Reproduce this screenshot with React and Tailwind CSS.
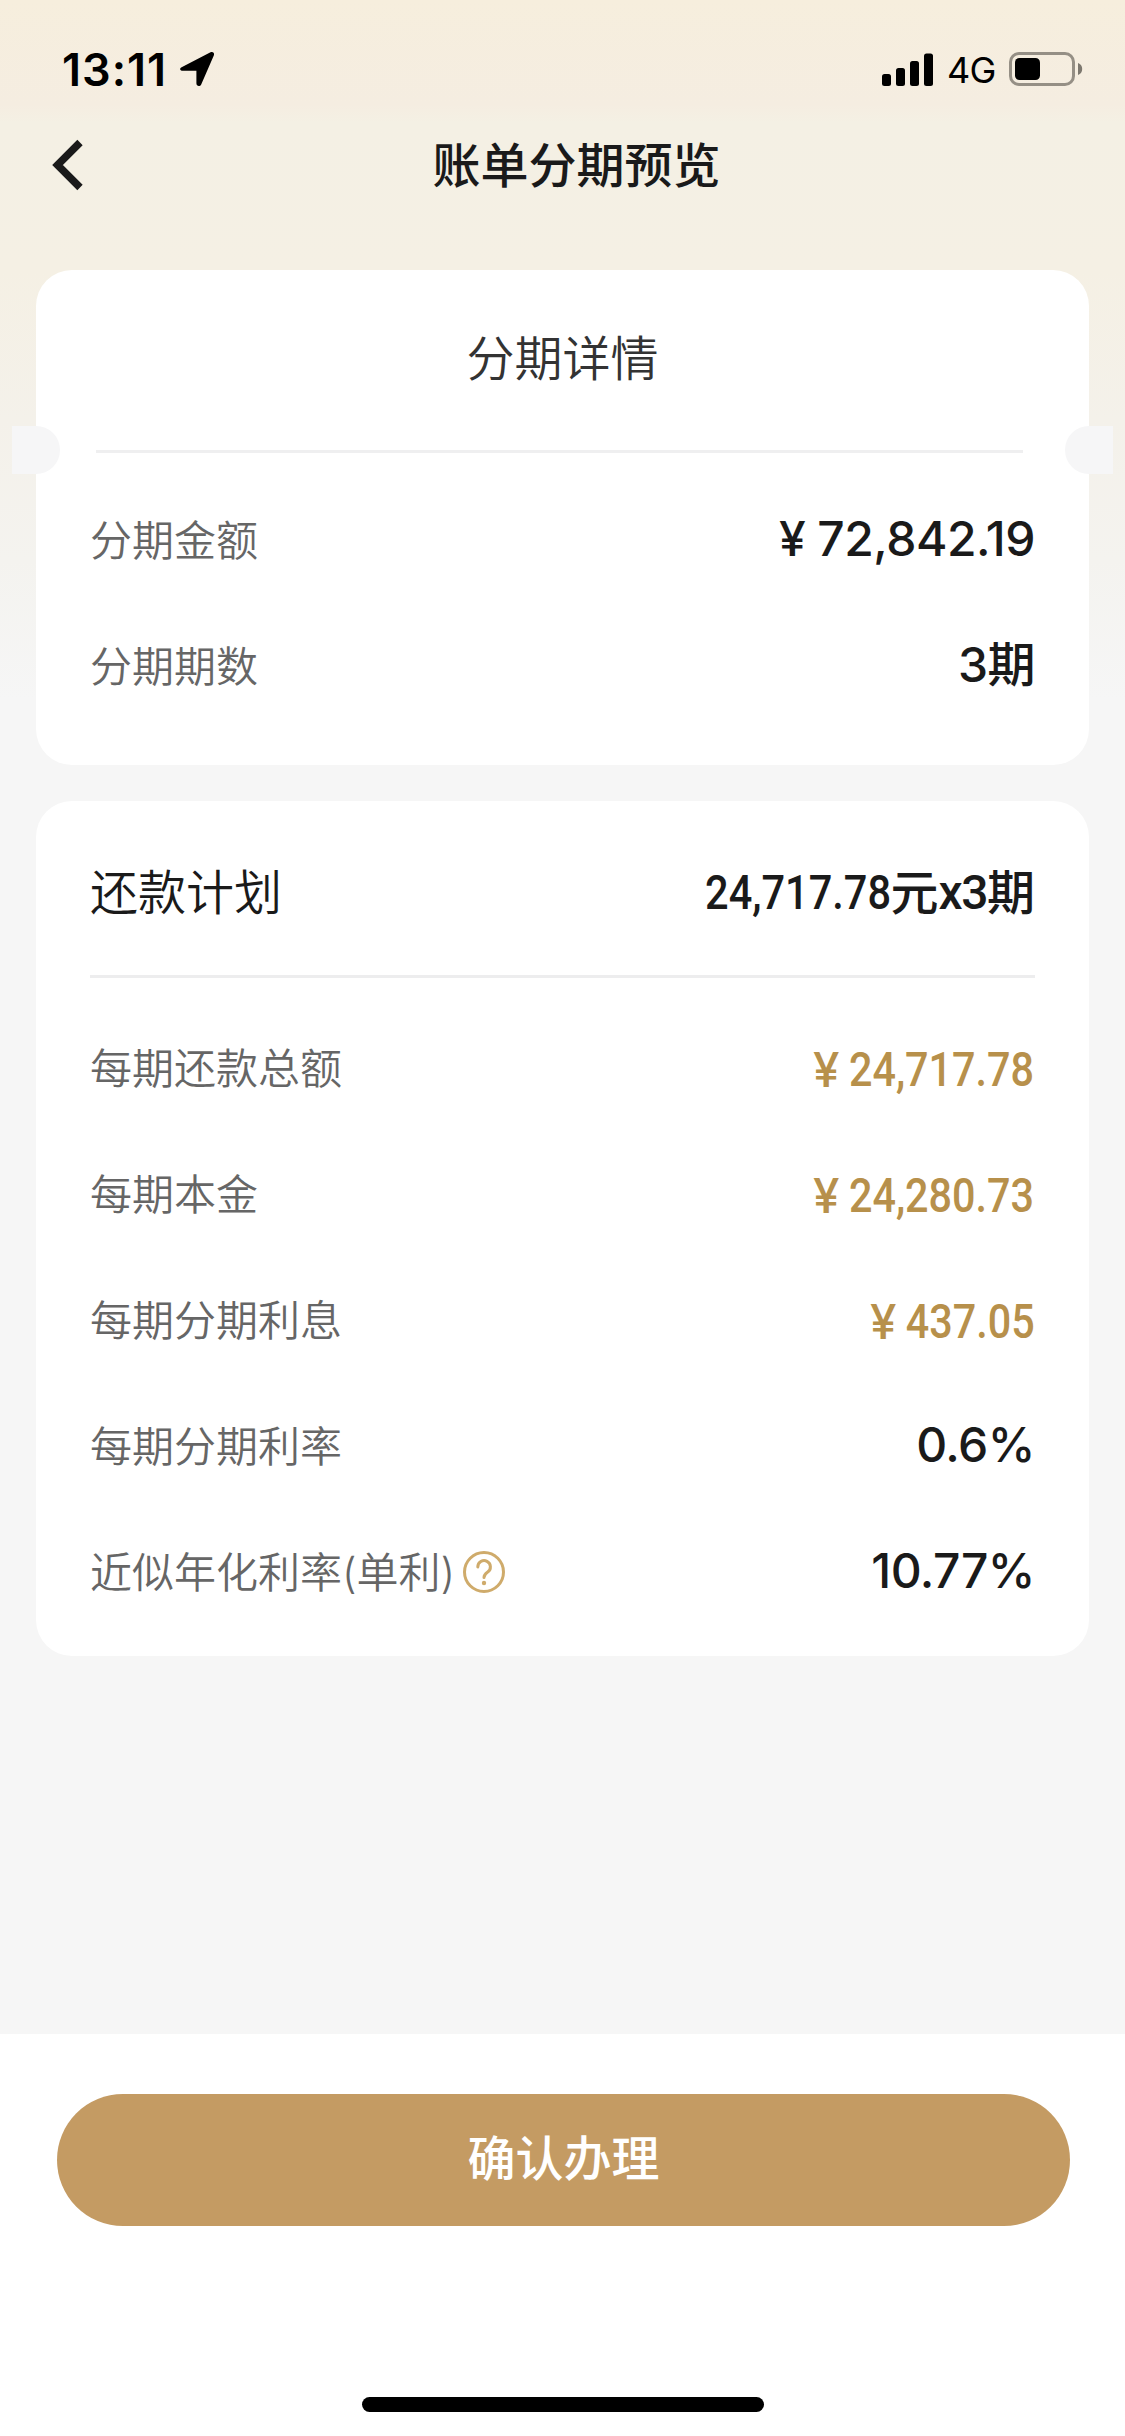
// =====================
// App.jsx - 账单分期预览
// =====================

import React from 'react'

const details = [
  { label: '分期金额', value: '72,842.19', yen: true },
  { label: '分期期数', value: '3', unit: '期' },
]

const plan = [
  { label: '每期还款总额', value: '24,717.78', gold: true },
  { label: '每期本金', value: '24,280.73', gold: true },
  { label: '每期分期利息', value: '437.05', gold: true },
  { label: '每期分期利率', value: '0.6%' },
  { label: '近似年化利率(单利)', value: '10.77%', help: true },
]

function StatusBar() {
  return (
    <div className="h-[105px] pt-[45px] pl-[62px] pr-[42px] flex justify-between">
      <div className="h-12 flex items-center">
        <span className="w-[117px] pt-0.5 text-[45px] leading-[48px] font-semibold tracking-[1px] text-black">13:11</span>
        <svg className="w-9 h-9" viewBox="0 0 36 36" fill="black">
          <path d="M2.6 16.2 31.5 1.2c2.3-1.1 4.4.9 3.3 3.3L22.2 33.4c-1.2 2.4-4.8 2-4.8-1.2V19.8H4C.9 19.8.2 17.4 2.6 16.2z" />
        </svg>
      </div>
      <div className="h-12 flex items-center">
        <svg className="w-[51px] h-[33px]" viewBox="0 0 51 33" fill="black">
          <rect x="0" y="21" width="9" height="12" rx="2.5" />
          <rect x="14" y="15" width="9" height="18" rx="2.5" />
          <rect x="28" y="8" width="9" height="25" rx="2.5" />
          <rect x="42" y="0.5" width="9" height="32.5" rx="2.5" />
        </svg>
        <span className="ml-3.5 w-[62px] pt-0.5 text-[36px] leading-[48px] tracking-[-0.8px] text-black">4G</span>
        <svg className="w-[74px] h-[34px]" viewBox="0 0 74 34">
          <rect x="1.5" y="1.5" width="63" height="31" rx="8.5" fill="none" stroke="#958f85" strokeWidth="3" />
          <rect x="6" y="6" width="25" height="22" rx="4.5" fill="black" />
          <path d="M69 11c2.700 1 4.200 3.300 4.200 6s-1.500 5-4.200 6z" fill="#7d786f" />
        </svg>
      </div>
    </div>
  )
}

function NavBar() {
  return (
    <div className="h-[120px] px-[50px] flex items-center justify-between">
      <svg className="w-9 h-[54px]" viewBox="0 0 36 54" fill="none">
        <path d="M30 4.500 7.500 27 30 49.500" stroke="#1a1a1a" strokeWidth="7.500" />
      </svg>
      <h1 className="pt-0.5 pl-7 text-[48px] leading-[60px] font-medium text-[#1a1a1a]">账单分期预览</h1>
      <div className="w-9" />
    </div>
  )
}

function Row({ label, value, unit, yen, gold, help }) {
  return (
    <div className="h-[126px] flex items-center justify-between">
      <div className="flex items-center text-[42px] font-[350] text-[#666]">
        {label}
        {help && (
          <svg className="ml-2 w-[42px] h-[42px]" viewBox="0 0 42 42" fill="none" stroke="#cfab6b" strokeWidth="3">
            <circle cx="21" cy="21" r="19.500" />
            <path d="M14.800 16a6.300 6.300 0 1 1 9.900 5.100c-2.600 1.800-3.700 2.900-3.700 5.400" strokeLinecap="round" />
            <circle cx="21" cy="32" r="2.2" fill="#cfab6b" stroke="none" />
          </svg>
        )}
      </div>
      {gold ? (
        <div className="pt-1 pr-px flex items-center text-[48px] font-medium text-[#b7904b] scale-x-[0.86] origin-right">
          <span className="mr-[11px] scale-x-[1.15] origin-right">¥</span>
          <span className="font-['Roboto']">{value}</span>
        </div>
      ) : (
        <div className="pb-[3px] text-[48px] font-medium tracking-[-0.5px] text-[#1a1a1a] flex items-center">
          {yen && <span className="mr-3">¥</span>}
          {value}
          {unit}
        </div>
      )}
    </div>
  )
}

export default function App() {
  return (
    <div className="w-[1125px] h-[2436px] flex flex-col font-['Inter','Noto_Sans_CJK_SC',sans-serif] bg-[#f6f6f6] bg-[linear-gradient(180deg,#f6eedd_0px,#f5ede1_105px,#f4f0e4_122px,#f5f0e4_270px,#f4f1ea_420px,#f4f3ef_560px,#f6f6f6_700px)]">
      <StatusBar />
      <NavBar />

      {/* 分期详情 */}
      <section className="relative mt-[45px] mx-9 h-[495px] bg-white rounded-[36px] px-[54px]">
        <h2 className="h-[180px] pb-0.5 flex items-center justify-center text-[48px] font-[350] text-[#333]">分期详情</h2>
        <div className="h-[3px] ml-1.5 mr-3 bg-[#efeff0]" />
        <div className="absolute top-[156px] -left-6 w-12 h-12 rounded-r-full bg-[#f6f6f7]" />
        <div className="absolute top-[156px] -right-6 w-12 h-12 rounded-l-full bg-[#f6f6f7]" />
        <div className="pt-6">
          {details.map((item) => (
            <Row key={item.label} {...item} />
          ))}
        </div>
      </section>

      {/* 还款计划 */}
      <section className="mt-9 mx-9 h-[855px] bg-white rounded-[36px] px-[54px]">
        <div className="h-[174px] pt-2.5 flex items-center justify-between text-[48px] text-[#1a1a1a]">
          <h2 className="font-[350]">还款计划</h2>
          <div className="flex items-center font-medium">
            <span className="font-['Roboto'] scale-x-[0.865] origin-right">24,717.78</span>
            元
            <span className="font-['Roboto'] tracking-[-1.5px]">x3</span>
            期
          </div>
        </div>
        <div className="h-[3px] bg-[#ededee]" />
        <div className="pt-[27px]">
          {plan.map((item) => (
            <Row key={item.label} {...item} />
          ))}
        </div>
      </section>

      {/* 底部按钮 */}
      <footer className="mt-auto h-[402px] bg-white pt-[60px] pb-6 flex flex-col items-center justify-between">
        <button className="ml-0.5 w-[1013px] h-[132px] pb-0.5 rounded-full bg-[#c49b63] text-white text-[48px] font-medium">
          确认办理
        </button>
        <div className="w-[402px] h-[15px] rounded-full bg-black" />
      </footer>
    </div>
  )
}
